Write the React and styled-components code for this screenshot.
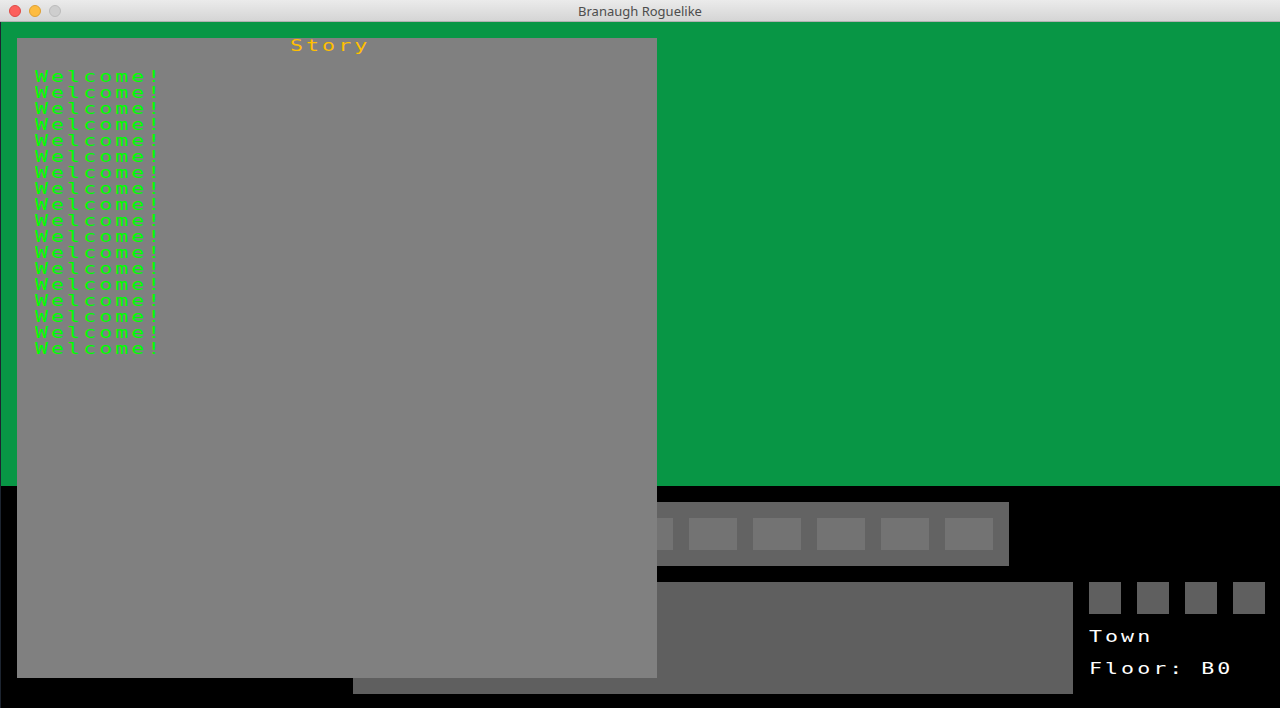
import styled, { createGlobalStyle } from 'styled-components';

const GlobalStyle = createGlobalStyle`
  html, body {
    margin: 0;
    padding: 0;
    background: #000;
  }
  #root {
    width: 1280px;
    height: 708px;
    overflow: hidden;
  }
`;

const Window = styled.div`
  display: flex;
  flex-direction: column;
  width: 1280px;
  height: 708px;
  background: #000;
`;

const TitleBar = styled.div`
  position: relative;
  display: flex;
  align-items: center;
  justify-content: center;
  height: 21px;
  flex: 0 0 21px;
  background: linear-gradient(#ebebeb, #d5d5d5);
  border-bottom: 1px solid #b1b1b1;
  font-family: "Noto Sans", "Liberation Sans", sans-serif;
  font-size: 13px;
  color: #4d4d4d;
`;

const Lights = styled.div`
  position: absolute;
  left: 9px;
  top: 5px;
  display: flex;
  gap: 8px;
`;

const Light = styled.span`
  width: 12px;
  height: 12px;
  border-radius: 50%;
  box-sizing: border-box;
  background: ${({ color }) => color};
  border: 1px solid ${({ edge }) => edge};
`;

const Screen = styled.div`
  position: relative;
  flex: 1;
  display: flex;
  flex-direction: column;
  border-left: 1px solid #1c2430;
  font-family: "DejaVu Sans Mono", "Liberation Mono", monospace;
  font-size: 16px;
  line-height: 16px;
`;

// the game font is a wide bitmap font: stretch a mono face to a 16px cell
const Stretch = styled.span`
  display: inline-block;
  white-space: pre;
  letter-spacing: 2.25px;
  transform: scaleX(1.35);
  transform-origin: left top;
`;

const Map = styled.div`
  flex: 0 0 464px;
  background: #089645;
`;

const Hud = styled.div`
  flex: 1;
  display: flex;
  flex-direction: column;
  gap: 16px;
  padding: 16px 0 0 352px;
`;

const Toolbar = styled.div`
  display: flex;
  gap: 16px;
  width: 656px;
  box-sizing: border-box;
  padding: 16px;
  background: #636363;
`;

const Slot = styled.div`
  width: 48px;
  height: 32px;
  background: #737373;
`;

const BottomRow = styled.div`
  display: flex;
  gap: 16px;
`;

const LogPanel = styled.div`
  width: 720px;
  height: 112px;
  background: #5f5f5f;
`;

const Status = styled.div`
  display: flex;
  flex-direction: column;
  color: #fff;
`;

const Effects = styled.div`
  display: flex;
  gap: 16px;
  margin-bottom: 15px;
`;

const Effect = styled.div`
  width: 32px;
  height: 32px;
  background: #5f5f5f;
`;

const StatusLine = styled.div`
  height: 16px;
  margin-bottom: 16px;
`;

const StoryPanel = styled.div`
  position: absolute;
  left: 16px;
  top: 16px;
  width: 640px;
  height: 640px;
  background: #808080;
`;

const StoryTitle = styled.div`
  height: 16px;
  padding-left: 273px;
  color: #ffbf00;
`;

const StoryLines = styled.div`
  margin-top: 15px;
  padding-left: 18px;
  color: #00ff00;
`;

const StoryLine = styled.div`
  height: 16px;
`;

const slots = Array.from({ length: 10 });
const effects = Array.from({ length: 4 });
const story = Array.from({ length: 18 }, () => 'Welcome!');

export default function App() {
  return (
    <>
      <GlobalStyle />
      <Window>
        <TitleBar>
          <Lights>
            <Light color="#fc605c" edge="#de4a46" />
            <Light color="#fdbc40" edge="#dea033" />
            <Light color="#cecece" edge="#bcbcbc" />
          </Lights>
          Branaugh Roguelike
        </TitleBar>
        <Screen>
          <Map />
          <Hud>
            <Toolbar>
              {slots.map((_, i) => (
                <Slot key={i} />
              ))}
            </Toolbar>
            <BottomRow>
              <LogPanel />
              <Status>
                <Effects>
                  {effects.map((_, i) => (
                    <Effect key={i} />
                  ))}
                </Effects>
                <StatusLine><Stretch>Town</Stretch></StatusLine>
                <StatusLine><Stretch>Floor: B0</Stretch></StatusLine>
              </Status>
            </BottomRow>
          </Hud>
          <StoryPanel>
            <StoryTitle><Stretch>Story</Stretch></StoryTitle>
            <StoryLines>
              {story.map((line, i) => (
                <StoryLine key={i}><Stretch>{line}</Stretch></StoryLine>
              ))}
            </StoryLines>
          </StoryPanel>
        </Screen>
      </Window>
    </>
  );
}
